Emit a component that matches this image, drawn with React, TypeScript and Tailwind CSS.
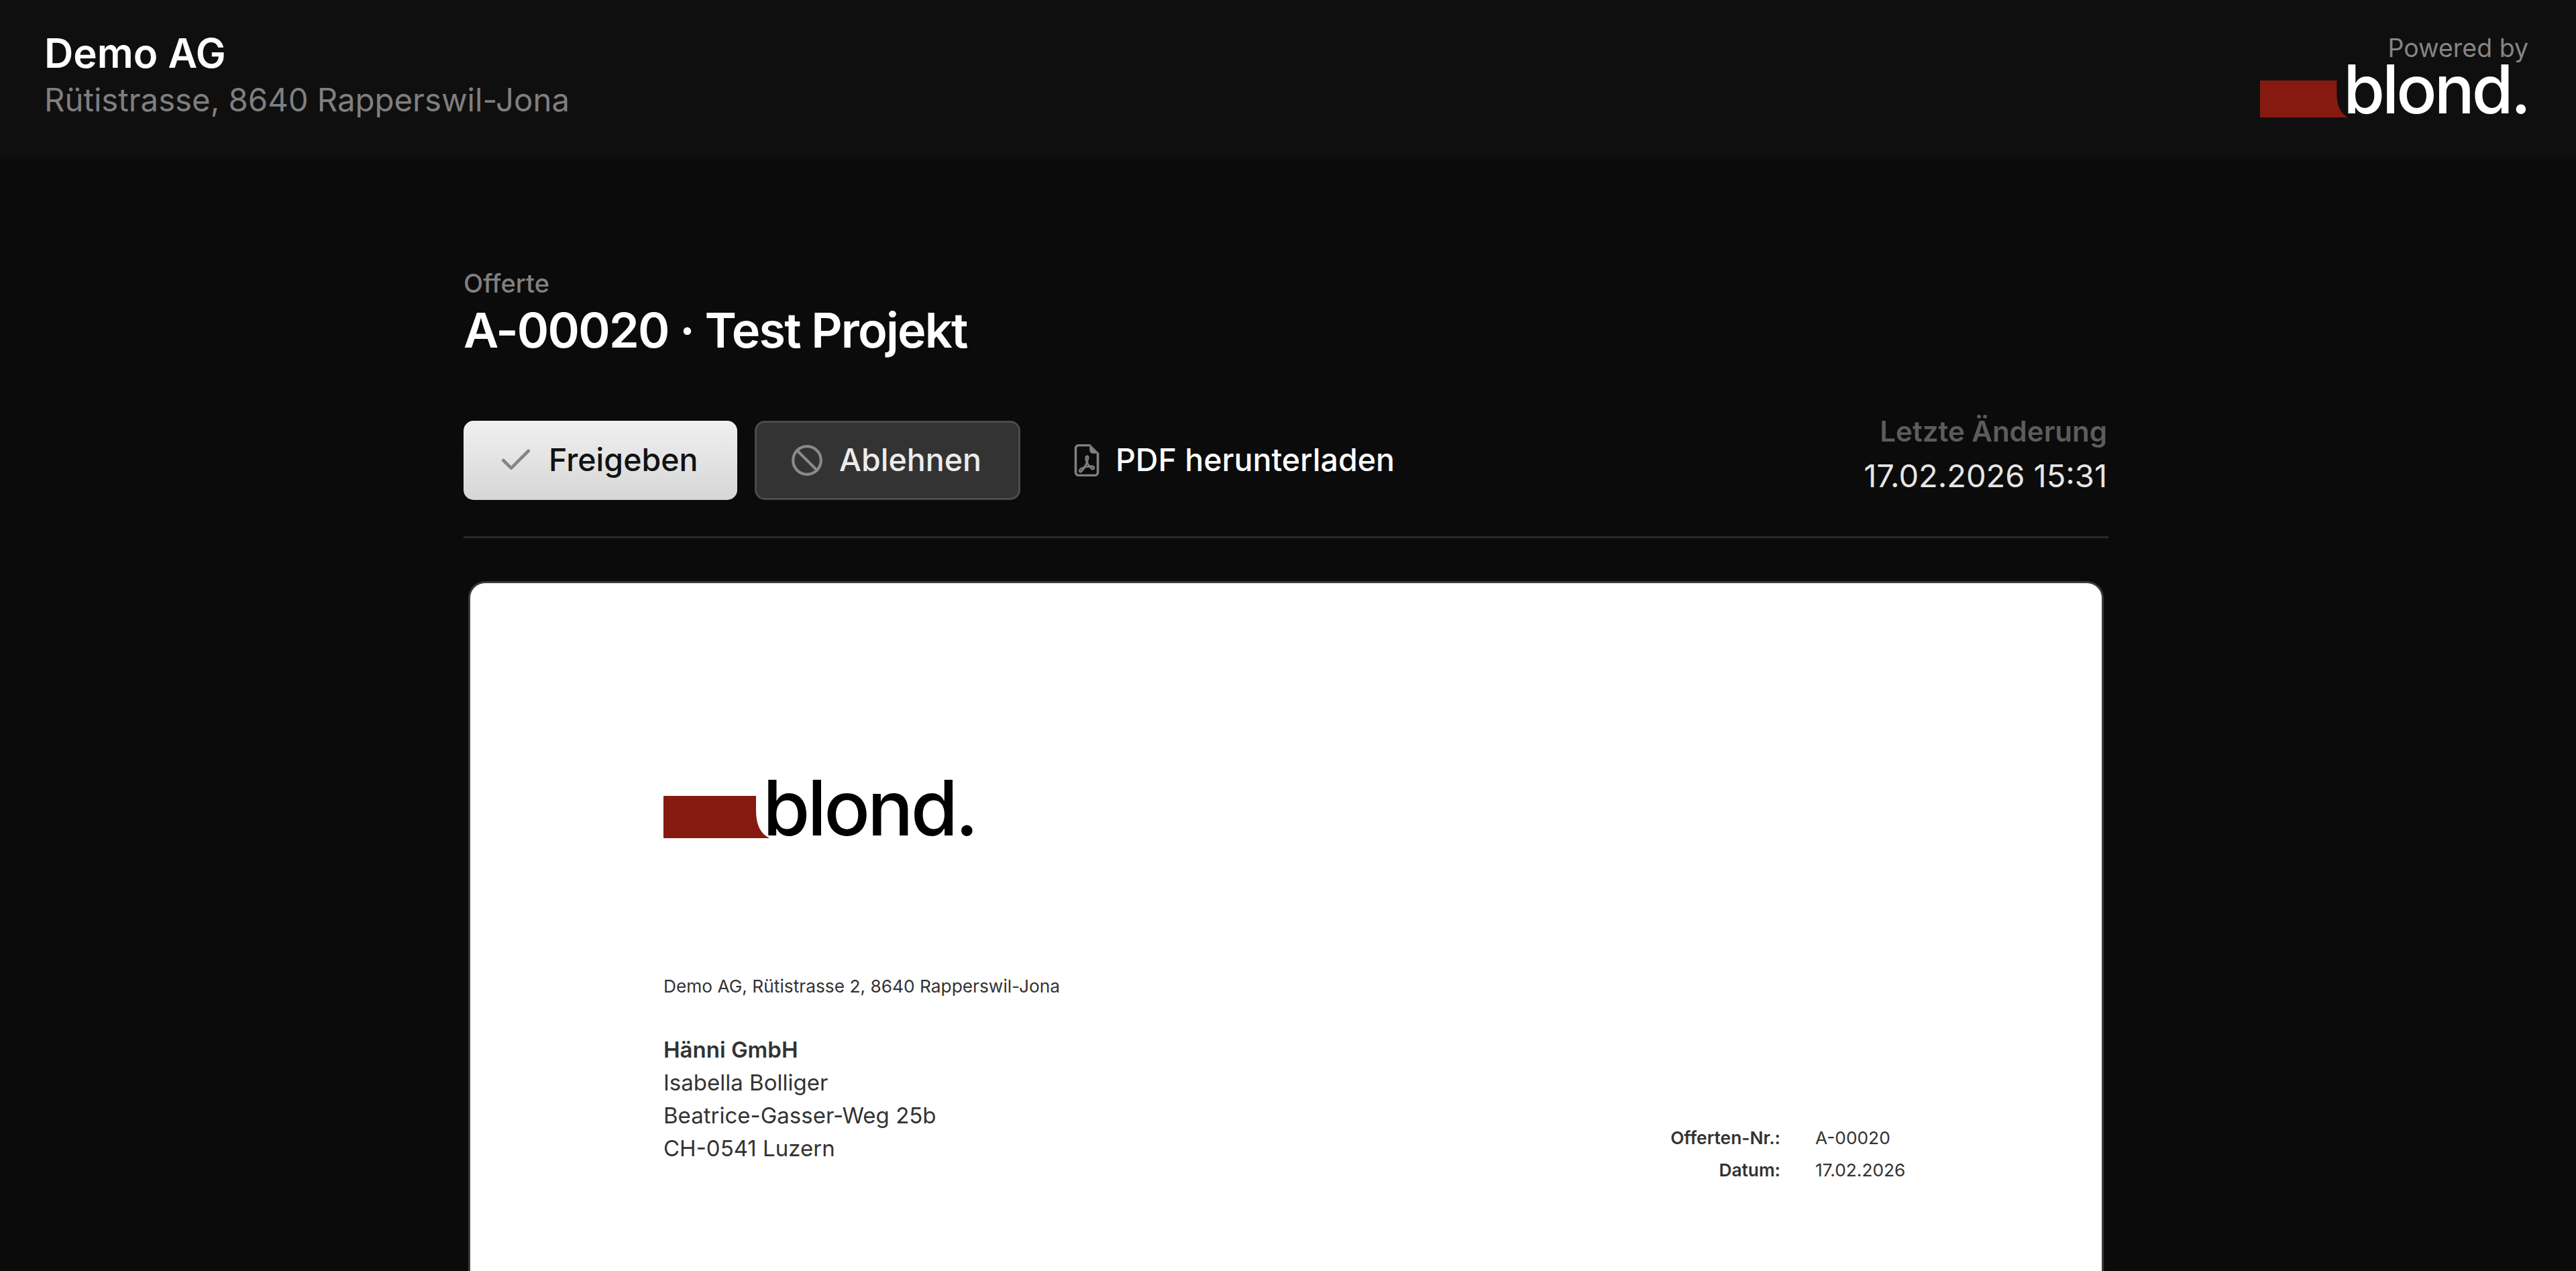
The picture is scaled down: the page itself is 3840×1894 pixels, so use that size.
import { Ban, Check } from "lucide-react";
import { BsFileEarmarkPdf } from "react-icons/bs";

function Logo({ small }: { small?: boolean }) {
  return (
    <div className={small ? "flex items-end h-[78px]" : "flex items-end h-[90px]"}>
      <svg
        className={small ? "w-[131px] h-[55px] mb-[-3px]" : "w-[158px] h-[63px]"}
        viewBox="0 0 158 63"
        preserveAspectRatio="none"
      >
        <path d="M0 0H138V22C138 42 144 56 158 63H0Z" fill="#861a10" />
      </svg>
      <span
        className={
          small
            ? "font-medium text-[100px] leading-[78px] tracking-[-4px] -ml-[7px] text-white"
            : "font-medium text-[114px] leading-[90px] tracking-[-4px] -ml-[10px] text-black"
        }
      >
        blond.
      </span>
    </div>
  );
}

export default function App() {
  return (
    <div className="h-[1894px] overflow-hidden bg-[#0b0b0b] font-['Inter',sans-serif]">
      <header className="h-[237px] bg-[#0f0f0f] pl-[66px] pr-[71px] flex items-start justify-between">
        <div className="pt-[44px]">
          <div className="text-[60px] leading-[70px] font-semibold text-white">Demo AG</div>
          <div className="text-[47.3px] leading-[70px] text-[#7f7f7f]">
            Rütistrasse, 8640 Rapperswil-Jona
          </div>
        </div>
        <div className="pt-[50px] flex flex-col items-end">
          <div className="text-[37.5px] leading-[44px] text-[#858585]">Powered by</div>
          <Logo small />
        </div>
      </header>

      <main className="w-[2452px] ml-[691px]">
        <div className="pt-[160px]">
          <div className="text-[38px] leading-[50px] font-medium text-[#808080]">Offerte</div>
          <h1 className="text-[72px] leading-[90px] font-semibold tracking-tight text-white">
            A-00020 · Test Projekt
          </h1>
        </div>

        <div className="mt-[73px] pb-[54px] border-b-[3px] border-[#2a2a2a] flex items-end justify-between">
          <div className="flex items-center">
            <button className="w-[408px] h-[118px] rounded-[15px] bg-gradient-to-b from-[#f0f0f0] to-[#d6d6d6] flex items-center pl-[50px] gap-[21px] text-[46.5px] font-medium text-[#111111]">
              <Check size={56} strokeWidth={2} className="text-[#858585]" />
              Freigeben
            </button>
            <button className="ml-[26px] w-[396px] h-[118px] rounded-[15px] bg-[#333333] border-[3px] border-[#4b4b4b] flex items-center pl-[50px] gap-[23px] text-[46.5px] font-medium text-[#ececec]">
              <Ban size={50} strokeWidth={2} className="text-[#8a8a8a]" />
              Ablehnen
            </button>
            <button className="ml-[75px] h-[118px] flex items-center gap-[19px] text-[46.5px] font-medium text-white">
              <BsFileEarmarkPdf size={48} className="text-[#808080] stroke-current stroke-[0.2px]" />
              PDF herunterladen
            </button>
          </div>
          <div className="text-right pr-[2px] pb-[3px]">
            <div className="text-[42px] leading-[66px] font-semibold text-[#5c5c5c]">
              Letzte Änderung
            </div>
            <div className="text-[47px] leading-[66px] text-[#e5e5e5]">17.02.2026 15:31</div>
          </div>
        </div>

        <div className="mx-[7px] mt-[64px] h-[1100px] rounded-t-[25px] bg-white border-[3px] border-b-0 border-[#3a3a3a] pl-[288px] pt-[290px] pr-[294px]">
          <Logo />
          <div className="mt-[201px] text-[26.3px] leading-[40px] text-[#333333]">
            Demo AG, Rütistrasse 2, 8640 Rapperswil-Jona
          </div>
          <div className="mt-[50px] flex items-end justify-between">
            <div className="text-[33px] leading-[49px] text-[#333333]">
              <div className="font-semibold">Hänni GmbH</div>
              <div>Isabella Bolliger</div>
              <div>Beatrice-Gasser-Weg 25b</div>
              <div>CH-0541 Luzern</div>
            </div>
            <div className="grid grid-cols-[auto_133px] gap-x-[52px] text-[26.3px] leading-[48px] text-[#333333] mb-[-32px]">
              <div className="font-semibold text-right">Offerten-Nr.:</div>
              <div>A-00020</div>
              <div className="font-semibold text-right">Datum:</div>
              <div>17.02.2026</div>
            </div>
          </div>
        </div>
      </main>
    </div>
  );
}
